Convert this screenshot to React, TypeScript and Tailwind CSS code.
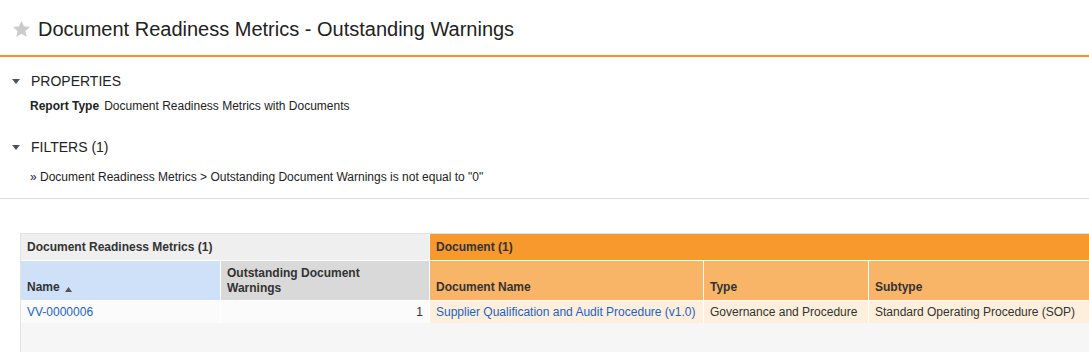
import React from 'react';

const Caret = () => (
  <svg width="8" height="5" viewBox="0 0 8 5" className="shrink-0">
    <path d="M0 0 L8 0 L4 5 Z" fill="#4a5360" />
  </svg>
);

const Star = () => (
  <svg width="19" height="18" viewBox="0 0 24 23" className="shrink-0">
    <path
      d="M12 0.8 L15.1 8.1 L23 8.8 L17 14 L18.8 21.8 L12 17.7 L5.2 21.8 L7 14 L1 8.8 L8.9 8.1 Z"
      fill="#cbcbcb"
    />
  </svg>
);

const App = () => {
  return (
    <div className="w-[1089px] h-[352px] overflow-hidden bg-white text-[#222] font-['Liberation_Sans',Arial,sans-serif]">
      {/* page title */}
      <div className="h-[57px] flex items-center gap-[7px] pl-[12px] pt-[2px] border-b-2 border-[#f7931e]">
        <Star />
        <h1 className="text-[20px] leading-none text-[#222]">
          Document Readiness Metrics - Outstanding Warnings
        </h1>
      </div>

      {/* properties */}
      <div className="pt-[14px] pl-[12px]">
        <div className="h-[20px] flex items-center gap-[11px]">
          <Caret />
          <span className="text-[14px]">PROPERTIES</span>
        </div>
        <div className="mt-[7px] h-[16px] flex items-center pl-[18px] text-[12px]">
          <span className="font-bold">Report Type</span>
          <span className="ml-[5px]">Document Readiness Metrics with Documents</span>
        </div>

        <div className="mt-[23px] h-[20px] flex items-center gap-[11px]">
          <Caret />
          <span className="text-[14px]">FILTERS (1)</span>
        </div>
        <div className="mt-[12px] h-[16px] flex items-center pl-[18px] text-[12px]">
          » Document Readiness Metrics &gt; Outstanding Document Warnings is not equal to "0"
        </div>
      </div>

      <div className="mt-[13px] border-t border-[#dedede]" />

      {/* report table */}
      <div className="mt-[34px] ml-[20px] h-[120px] border-t border-l border-[#e2e2e2] bg-[#f6f6f6]">
        <div className="grid grid-cols-[199px_208px_273px_164px_1fr] gap-px bg-white text-[12px]">
          <div className="col-span-2 h-[26px] flex items-center px-[6px] bg-[#efefef] font-bold text-[#333]">
            Document Readiness Metrics (1)
          </div>
          <div className="col-span-3 h-[26px] flex items-center px-[6px] bg-[#f7992d] font-bold text-[#333]">
            Document (1)
          </div>

          <div className="h-[39px] flex items-end pb-[4px] px-[6px] bg-[#cfe1f8] font-bold text-[#333]">
            Name
            <svg width="7" height="5" viewBox="0 0 7 5" className="ml-[5px] mb-[4px]">
              <path d="M0 5 L7 5 L3.5 0 Z" fill="#555" />
            </svg>
          </div>
          <div className="h-[39px] flex items-end pb-[4px] px-[6px] bg-[#d9d9d9] font-bold text-[#333] leading-[15px]">
            Outstanding Document<br />Warnings
          </div>
          <div className="h-[39px] flex items-end pb-[4px] px-[6px] bg-[#f8b567] font-bold text-[#333]">
            Document Name
          </div>
          <div className="h-[39px] flex items-end pb-[4px] px-[6px] bg-[#f8b567] font-bold text-[#333]">
            Type
          </div>
          <div className="h-[39px] flex items-end pb-[4px] px-[6px] bg-[#f8b567] font-bold text-[#333]">
            Subtype
          </div>

          <div className="h-[22px] flex items-center px-[6px] bg-[#fbfbfb] text-[#1a64c8]">
            VV-0000006
          </div>
          <div className="h-[22px] flex items-center justify-end px-[6px] bg-[#fbfbfb] text-[#333]">
            1
          </div>
          <div className="h-[22px] flex items-center px-[6px] bg-[#fdefdb] text-[#1a64c8] whitespace-nowrap">
            Supplier Qualification and Audit Procedure (v1.0)
          </div>
          <div className="h-[22px] flex items-center px-[6px] bg-[#fdefdb] text-[#333] whitespace-nowrap">
            Governance and Procedure
          </div>
          <div className="h-[22px] flex items-center px-[6px] bg-[#fdefdb] text-[#333] whitespace-nowrap">
            Standard Operating Procedure (SOP)
          </div>
        </div>
      </div>
    </div>
  );
};

export default App;
